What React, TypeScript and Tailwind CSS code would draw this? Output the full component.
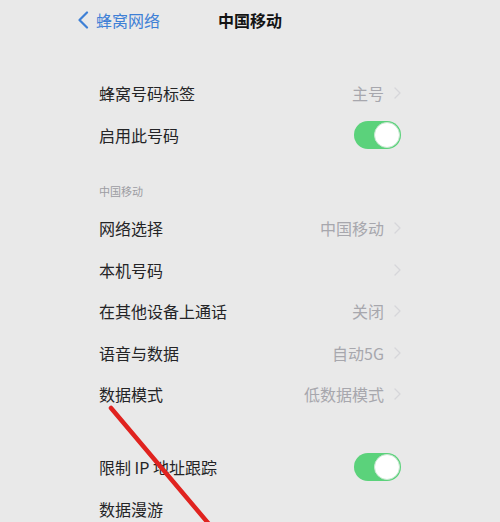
import React from 'react';

const font = { fontFamily: '"Noto Sans CJK SC", "Noto Sans", sans-serif' };

function Chevron() {
  return (
    <svg width="7" height="12" viewBox="0 0 7 12" className="ml-[10px] shrink-0">
      <path d="M1 1l5 5-5 5" fill="none" stroke="#d6d6da" strokeWidth="1.3" strokeLinecap="round" strokeLinejoin="round" />
    </svg>
  );
}

function Toggle() {
  return (
    <div className="relative w-[47px] h-[28px] rounded-full bg-[#5bd27b]">
      <div className="absolute right-[1px] top-[1px] w-[26px] h-[26px] rounded-full bg-white border border-[#c9e6d1]" />
    </div>
  );
}

function Row({ label, value, chevron = true, toggle = false }: { label: string; value?: string; chevron?: boolean; toggle?: boolean }) {
  return (
    <div className="h-[41.5px] flex items-center justify-between">
      <span className="text-[16px] text-[#242426] leading-none">{label}</span>
      {toggle ? (
        <Toggle />
      ) : (
        <div className="flex items-center">
          {value && <span className="text-[16px] text-[#a7a7ad] leading-none">{value}</span>}
          {chevron && <Chevron />}
        </div>
      )}
    </div>
  );
}

export default function App() {
  return (
    <div className="relative w-[500px] h-[522px] overflow-hidden bg-[#e9e9e9]" style={font}>
      {/* Nav bar */}
      <div className="relative h-[40px] flex items-center">
        <div className="flex items-center pl-[77px] text-[#3e80d6]">
          <svg width="12" height="18" viewBox="0 0 12 18">
            <path d="M10 1.5L2.5 9l7.5 7.5" fill="none" stroke="#3e80d6" strokeWidth="2.2" strokeLinecap="round" strokeLinejoin="round" />
          </svg>
          <span className="ml-[7px] text-[16px] leading-none">蜂窝网络</span>
        </div>
        <span className="absolute left-0 right-0 text-center text-[16px] font-bold text-[#141414] leading-none pointer-events-none">中国移动</span>
      </div>

      <div className="px-[99px] pt-[32.25px]">
        <Row label="蜂窝号码标签" value="主号" />
        <Row label="启用此号码" toggle />

        <div className="h-[52px] flex items-end pb-[9px]">
          <span className="text-[11px] leading-[14px] text-[#9c9ca2]">中国移动</span>
        </div>

        <Row label="网络选择" value="中国移动" />
        <Row label="本机号码" />
        <Row label="在其他设备上通话" value="关闭" />
        <Row label="语音与数据" value="自动5G" />
        <Row label="数据模式" value="低数据模式" />

        <div className="h-[31.5px]" />

        <Row label="限制 IP 地址跟踪" toggle />
        <Row label="数据漫游" chevron={false} />
      </div>

      {/* Red annotation stroke */}
      <svg className="absolute left-0 top-0 pointer-events-none" width="500" height="522" viewBox="0 0 500 522">
        <path d="M111 408 L214 530" stroke="#e0231f" strokeWidth="4.5" strokeLinecap="round" />
      </svg>
    </div>
  );
}
